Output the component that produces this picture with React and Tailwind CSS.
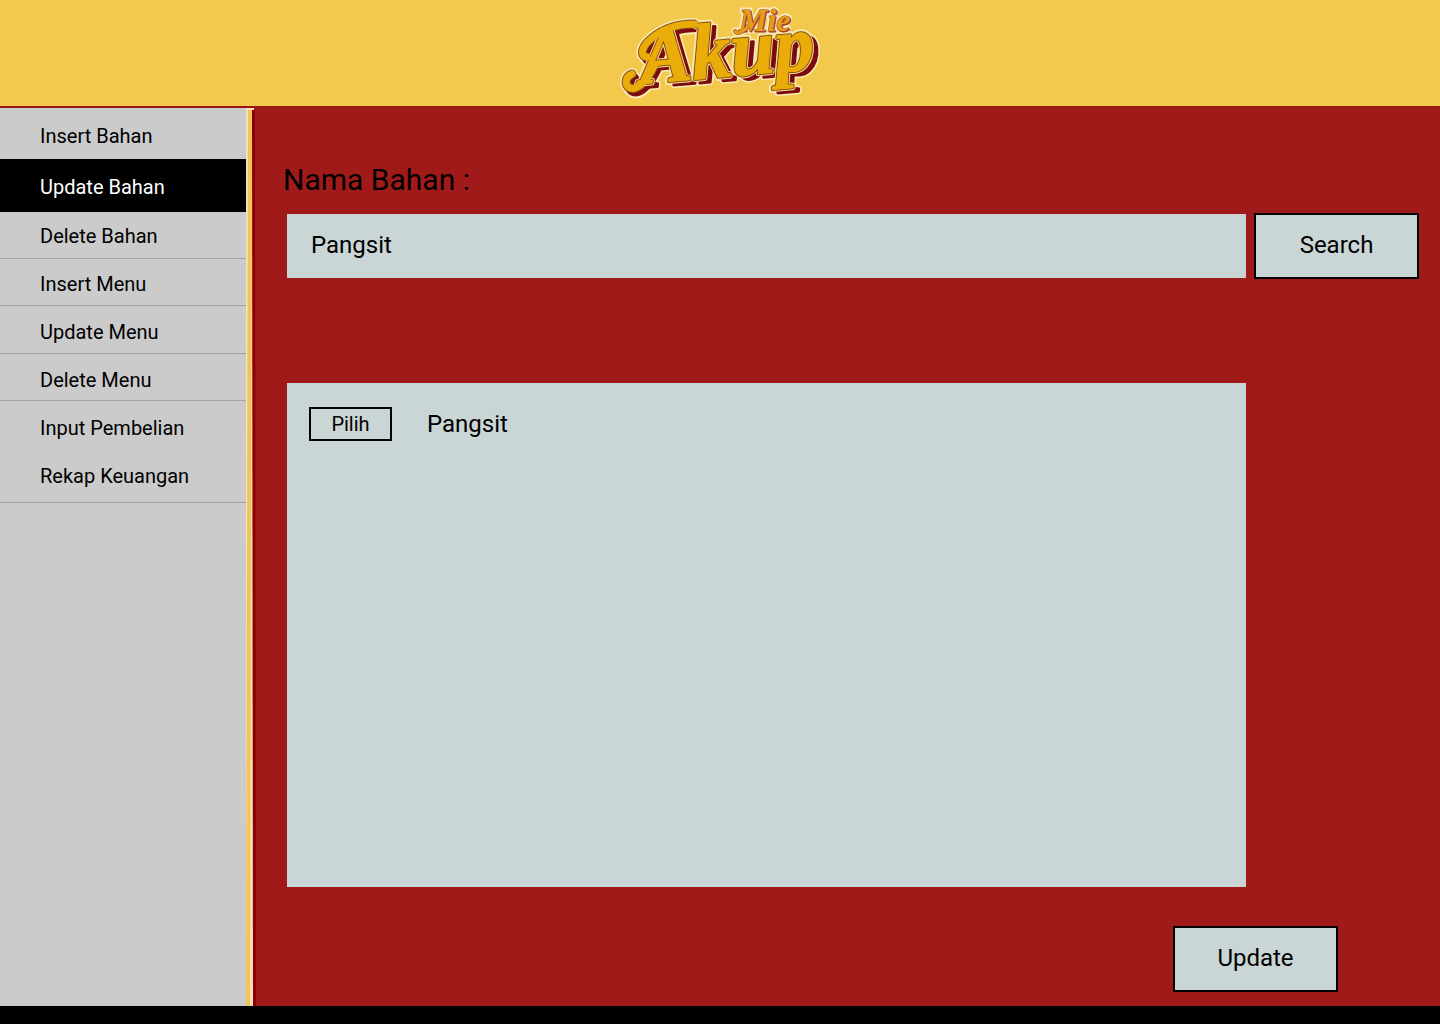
const menu = [
  { label: "Insert Bahan", box: "h-[51px] pt-4" },
  { label: "Update Bahan", box: "h-[53px] pt-4", active: true },
  { label: "Delete Bahan", box: "h-[47px] pt-3 border-b border-[#a3a3a3]" },
  { label: "Insert Menu", box: "h-[47px] pt-[13px] border-b border-[#a3a3a3]" },
  { label: "Update Menu", box: "h-12 pt-3.5 border-b border-[#a3a3a3]" },
  { label: "Delete Menu", box: "h-[47px] pt-3.5 border-b border-[#a3a3a3]" },
  { label: "Input Pembelian", box: "h-12 pt-[15px]" },
  { label: "Rekap Keuangan", box: "h-[54px] pt-[15px] border-b border-[#a3a3a3]" },
];

function Wordmark({ word, x, y, size, fill, stroke, width }) {
  return (
    <text
      x={x}
      y={y}
      fontFamily='"Liberation Serif", serif'
      fontStyle="italic"
      fontWeight="700"
      fontSize={size}
      fill={fill}
      stroke={stroke}
      strokeWidth={width}
      strokeLinejoin="round"
      paintOrder="stroke"
    >
      {word}
    </text>
  );
}

const swash = "M36 66 C30 79 20 91 12 88 C6 85 7 77 14 74";
const bar = "M29 57 C21 56 24 46 34 38 C46 28 62 24 76 24";

function Flourish({ color, width, dx = 0, dy = 0 }) {
  return (
    <g
      transform={`translate(${dx} ${dy})`}
      fill="none"
      stroke={color}
      strokeWidth={width}
      strokeLinecap="round"
    >
      <path d={swash} />
      <path d={bar} />
    </g>
  );
}

function Tittle({ color, width }) {
  return (
    <path
      d="M117 31 C119 35 126 32 131 25"
      fill="none"
      stroke={color}
      strokeWidth={width}
      strokeLinecap="round"
    />
  );
}

function Logo() {
  return (
    <svg
      width="240"
      height="106"
      viewBox="-18 0 240 106"
      role="img"
      aria-label="Mie Akup"
      className="overflow-visible"
    >
      <Flourish color="#fbeab8" width={12} />
      <Flourish color="#fbeab8" width={12} dx={3} dy={4} />
      <g transform="rotate(-5 23 84)">
        <Wordmark word="Akup" x={23} y={84} size={79} fill="#fbeab8" stroke="#fbeab8" width={7} />
        <Wordmark word="Akup" x={28} y={88} size={79} fill="#fbeab8" stroke="#fbeab8" width={6} />
        <Wordmark word="Akup" x={28} y={88} size={79} fill="#7c0b10" stroke="#7c0b10" width={3} />
      </g>
      <Flourish color="#7c0b10" width={8} dx={3} dy={4} />
      <Flourish color="#8a5216" width={9} />
      <g transform="rotate(-5 23 84)">
        <Wordmark word="Akup" x={23} y={84} size={79} fill="#eaac08" stroke="#f6dc91" width={5} />
        <Wordmark word="Akup" x={23} y={84} size={79} fill="#eaac08" stroke="#8a5216" width={3} />
        <Wordmark word="Akup" x={23} y={84} size={79} fill="#eaac08" stroke="#eaac08" width={1} />
      </g>
      <Flourish color="#eaac08" width={7} />
      <Tittle color="#fbeab8" width={7} />
      <Wordmark word="Mie" x={121} y={31} size={32} fill="#fbeab8" stroke="#fbeab8" width={5} />
      <Wordmark word="Mie" x={122} y={32} size={32} fill="#b5382a" stroke="#b5382a" width={1} />
      <Tittle color="#94551b" width={4} />
      <Wordmark word="Mie" x={121} y={31} size={32} fill="#e79a1c" stroke="#94551b" width={1} />
      <Tittle color="#e79a1c" width={3} />
    </svg>
  );
}

function Divider() {
  return (
    <div className="relative w-2.5 shrink-0" aria-hidden="true">
      <div className="absolute inset-0 bg-[#f6e2b4] [clip-path:polygon(0_0,8px_0,8px_100%,0_100%)]" />
      <div className="absolute inset-x-0 bottom-0 top-0.5 bg-[#f0c65c] [clip-path:polygon(2px_0,6px_0,4px_100%,0_100%)]" />
      <div className="absolute inset-x-0 bottom-0 top-0.5 bg-[#8b0000] [clip-path:polygon(6px_0,9px_0,10px_100%,7px_100%)]" />
    </div>
  );
}

export default function App() {
  return (
    <div className="flex min-h-screen flex-col bg-[#a01a19] font-['Roboto',sans-serif] text-black">
      <header className="flex h-[108px] shrink-0 justify-center border-b-2 border-[#9b1414] bg-[#f3c94d]">
        <Logo />
      </header>

      <div className="flex flex-1">
        <nav className="w-[246px] shrink-0 bg-[#cbcbcb]">
          {menu.map((item) => (
            <a
              key={item.label}
              href="#"
              aria-current={item.active ? "page" : undefined}
              className={`block pl-10 text-xl leading-6 ${item.box} ${
                item.active ? "bg-black text-white" : ""
              }`}
            >
              {item.label}
            </a>
          ))}
        </nav>
        <Divider />

        <main className="flex flex-1 flex-col pb-3.5 pl-[31px] pr-[21px] pt-[54px]">
          <label htmlFor="nama" className="-ml-1 text-[30px] leading-9">
            Nama Bahan :
          </label>
          <form className="mt-[15px] flex items-center gap-2" onSubmit={(e) => e.preventDefault()}>
            <input
              id="nama"
              type="text"
              defaultValue="Pangsit"
              className="h-16 min-w-0 flex-1 bg-[#cad5d5] px-6 pb-0.5 text-2xl outline-none"
            />
            <button
              type="submit"
              className="h-[66px] w-[165px] border-2 border-black bg-[#cad5d5] pb-0.5 text-2xl"
            >
              Search
            </button>
          </form>

          <section className="mr-[173px] mt-[104px] flex-1 bg-[#cad5d5] px-[22px] py-6">
            <div className="flex items-center gap-[35px]">
              <button type="button" className="h-[34px] w-[83px] border-2 border-black text-xl leading-6">
                Pilih
              </button>
              <span className="text-2xl">Pangsit</span>
            </div>
          </section>

          <button
            type="button"
            className="mr-[81px] mt-[39px] h-[66px] w-[165px] self-end border-2 border-black bg-[#cad5d5] pb-0.5 text-2xl"
          >
            Update
          </button>
        </main>
      </div>

      <footer className="h-[18px] shrink-0 bg-black" />
    </div>
  );
}
